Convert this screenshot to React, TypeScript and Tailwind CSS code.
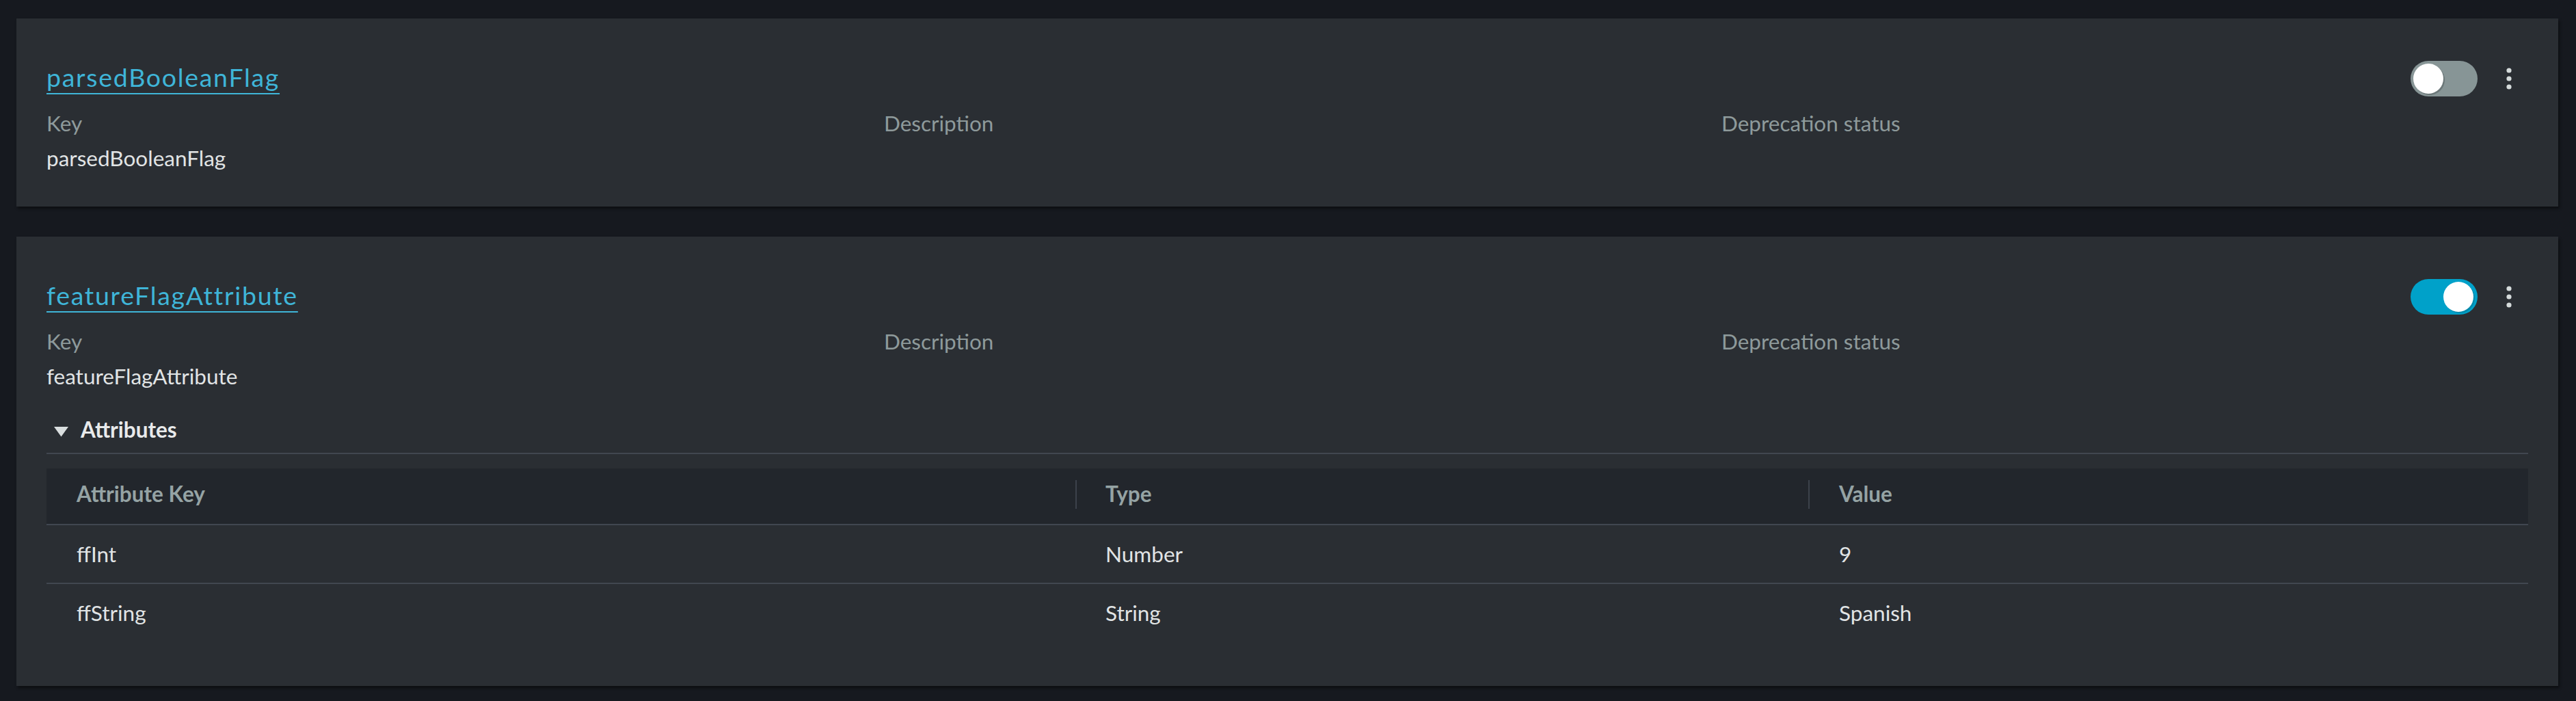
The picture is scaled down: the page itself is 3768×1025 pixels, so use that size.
import React from "react";

type Attr = { key: string; type: string; value: string };

const font = { fontFamily: "Lato, 'Noto Sans', sans-serif" };

function Toggle({ on }: { on: boolean }) {
  return (
    <div
      className={
        on
          ? "relative h-[52px] w-[98px] rounded-full bg-[#00a1c9]"
          : "relative h-[52px] w-[98px] rounded-full bg-[#879596]"
      }
    >
      <div
        className={
          on
            ? "absolute top-[4px] left-[48px] h-[44px] w-[44px] rounded-full bg-white shadow-[2px_2px_0_0_#0089ab]"
            : "absolute top-[4px] left-[4px] h-[44px] w-[44px] rounded-full bg-white shadow-[2px_2px_0_0_#6b7778]"
        }
      />
    </div>
  );
}

function Kebab() {
  return (
    <button className="flex h-[48px] w-[56px] items-center justify-center">
      <svg width="8" height="32" viewBox="0 0 8 32">
        <circle cx="4" cy="4" r="3.6" fill="#d5dbdb" />
        <circle cx="4" cy="16" r="3.6" fill="#d5dbdb" />
        <circle cx="4" cy="28" r="3.6" fill="#d5dbdb" />
      </svg>
    </button>
  );
}

function AttributesTable({ attributes }: { attributes: Attr[] }) {
  return (
    <div className="mt-[21px] text-[31.5px] leading-[45px]">
      <div className="grid h-[83px] grid-cols-[1505px_1072px_1fr] items-center border-b-2 border-[#414750] bg-[#22262c] pb-[6px] font-bold text-[#95a3a4]">
        <span className="pl-[44px]">Attribute Key</span>
        <div className="flex items-center">
          <span className="h-[42px] w-[2px] bg-[#3c424b]" />
          <span className="ml-[42px]">Type</span>
        </div>
        <div className="flex items-center">
          <span className="h-[42px] w-[2px] bg-[#3c424b]" />
          <span className="ml-[43px]">Value</span>
        </div>
      </div>
      {attributes.map((a, i) => (
        <div
          key={a.key}
          className={
            i < attributes.length - 1
              ? "grid h-[86px] grid-cols-[1505px_1072px_1fr] items-center border-b-2 border-[#414750] text-[#e1e4e5]"
              : "grid h-[84px] grid-cols-[1505px_1072px_1fr] items-center text-[#e1e4e5]"
          }
        >
          <span className="pl-[44px]">{a.key}</span>
          <span className="pl-[44px]">{a.type}</span>
          <span className="pl-[45px]">{a.value}</span>
        </div>
      ))}
    </div>
  );
}

function FlagCard({
  name,
  on,
  attributes,
}: {
  name: string;
  on: boolean;
  attributes?: Attr[];
}) {
  return (
    <div
      className={
        attributes
          ? "bg-[#2a2e33] px-[44px] pt-[60px] pb-[65px] shadow-[2px_3px_4px_rgba(0,0,0,0.45)]"
          : "bg-[#2a2e33] px-[44px] pt-[60px] pb-[48px] shadow-[2px_3px_4px_rgba(0,0,0,0.45)]"
      }
    >
      <div className="flex h-[56px] items-center justify-between">
        <a
          href="#"
          className="mb-[5px] text-[37.5px] leading-[50px] tracking-[1.7px] text-[#3fb5d8] underline decoration-2 underline-offset-[9px]"
        >
          {name}
        </a>
        <div className="flex items-center gap-[18px]">
          <Toggle on={on} />
          <Kebab />
        </div>
      </div>

      <div className="mt-[15px] grid grid-cols-[1225px_1225px_1fr] text-[31.5px] leading-[45px]">
        <div className="flex flex-col gap-[6px]">
          <span className="text-[#8e9a9b]">Key</span>
          <span className="text-[#e1e4e5]">{name}</span>
        </div>
        <div>
          <span className="text-[#8e9a9b]">Description</span>
        </div>
        <div>
          <span className="text-[#8e9a9b]">Deprecation status</span>
        </div>
      </div>

      {attributes && (
        <div className="mt-[33px]">
          <div className="flex h-[45px] items-center pl-[10px]">
            <svg width="23" height="16" viewBox="0 0 23 16" className="mt-[5px]">
              <path d="M1 1 H22 L11.5 15.5 Z" fill="#d9dedf" />
            </svg>
            <span className="ml-[17px] text-[31.5px] font-bold leading-[45px] text-[#e8eaeb]">
              Attributes
            </span>
          </div>
          <div className="mt-[11px] h-[2px] bg-[#414750]" />
          <AttributesTable attributes={attributes} />
        </div>
      )}
    </div>
  );
}

export default function App() {
  return (
    <div
      className="min-h-screen bg-[#16191f] pt-[27px] pb-[22px] pl-[24px] pr-[26px]"
      style={font}
    >
      <div className="flex flex-col gap-[44px]">
        <FlagCard name="parsedBooleanFlag" on={false} />
        <FlagCard
          name="featureFlagAttribute"
          on={true}
          attributes={[
            { key: "ffInt", type: "Number", value: "9" },
            { key: "ffString", type: "String", value: "Spanish" },
          ]}
        />
      </div>
    </div>
  );
}
